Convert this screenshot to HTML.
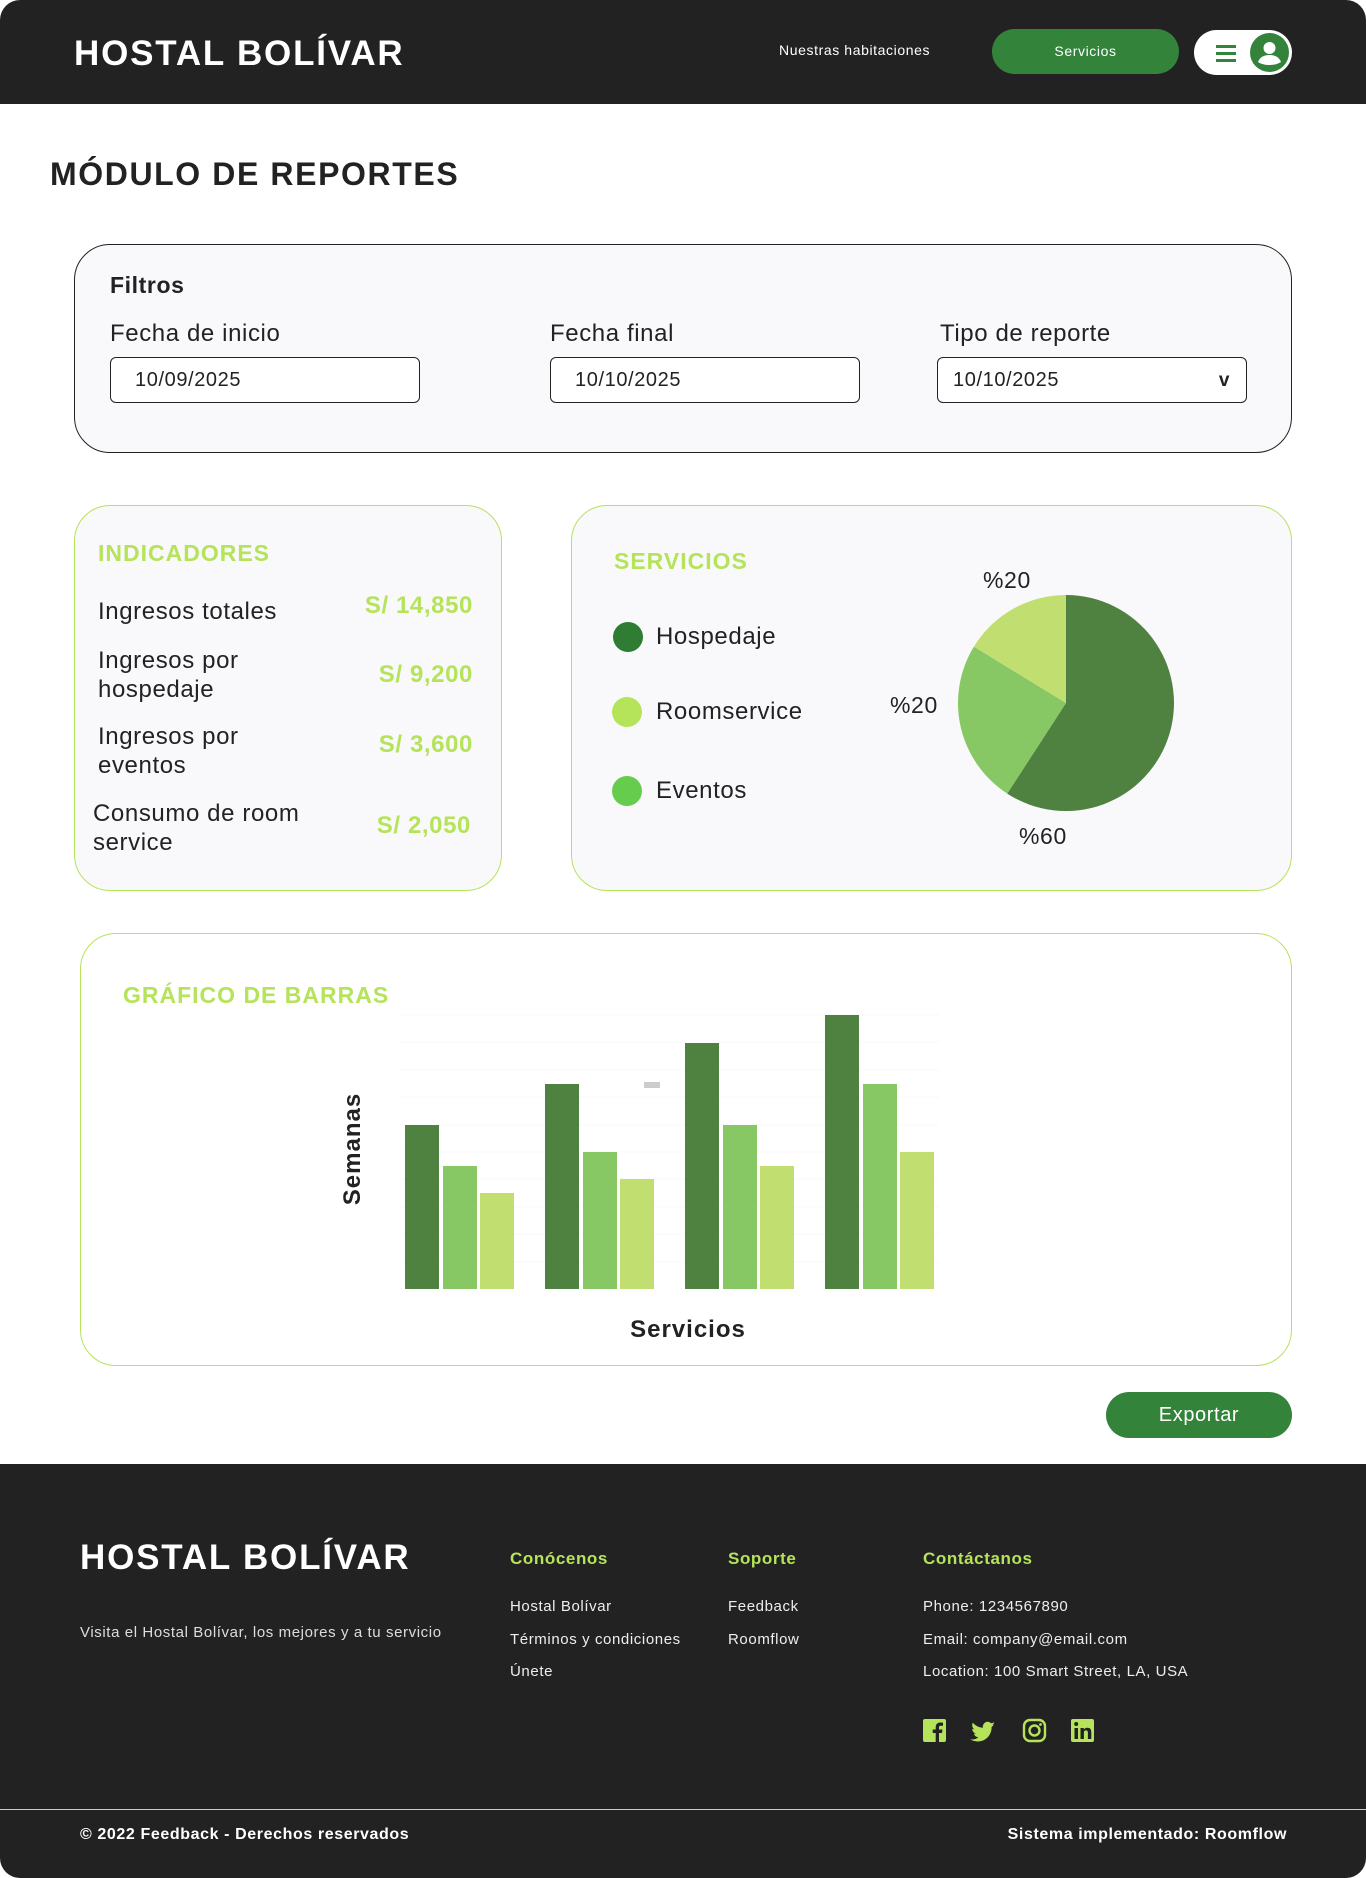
<!DOCTYPE html>
<html><head><meta charset="utf-8"><style>
*{margin:0;padding:0;box-sizing:border-box}
body{width:1366px;height:1878px;background:#fff;font-family:"Liberation Sans",sans-serif;color:#222;position:relative;overflow:hidden;letter-spacing:0.6px}
.a{position:absolute;white-space:nowrap}
.b{font-weight:bold}
.g{color:#b5e35a}
</style></head><body>
<div class="a" style="left:0;top:0;width:1366px;height:104px;background:#222;border-radius:20px 20px 0 0"></div>
<div class="a b" style="left:74px;top:34px;font-size:35px;color:#fff;letter-spacing:1.8px">HOSTAL BOLÍVAR</div>
<div class="a" style="left:779px;top:42px;font-size:14px;color:#fff">Nuestras habitaciones</div>
<div class="a" style="left:992px;top:29px;width:187px;height:45px;background:#33833a;border-radius:23px;color:#fff;font-size:14px;text-align:center;line-height:45px">Servicios</div>
<div class="a" style="left:1194px;top:30px;width:98px;height:45px;background:#fff;border-radius:23px"></div>
<div class="a" style="left:1216px;top:45px;width:20px;height:3px;background:#33833a;box-shadow:0 7px 0 #33833a,0 14px 0 #33833a"></div>
<svg class="a" style="left:1250px;top:33px" width="39" height="39" viewBox="0 0 39 39"><circle cx="19.5" cy="19.5" r="19.5" fill="#33833a"/><circle cx="19.5" cy="15" r="6" fill="#fff"/><path d="M8 29c2-5 6-7 11.5-7s9.5 2 11.5 7c-3 2-7 3-11.5 3S11 31 8 29z" fill="#fff"/></svg>

<div class="a b" style="left:50px;top:156px;font-size:32px;letter-spacing:1.6px">MÓDULO DE REPORTES</div>

<div class="a" style="left:74px;top:244px;width:1218px;height:209px;background:#f9f9fb;border:1.5px solid #222;border-radius:36px"></div>
<div class="a b" style="left:110px;top:272px;font-size:23px">Filtros</div>
<div class="a" style="left:110px;top:320px;font-size:24px">Fecha de inicio</div>
<div class="a" style="left:550px;top:320px;font-size:24px">Fecha final</div>
<div class="a" style="left:940px;top:320px;font-size:24px">Tipo de reporte</div>
<div class="a" style="left:110px;top:357px;width:310px;height:46px;background:#fff;border:1.5px solid #222;border-radius:6px;font-size:20px;line-height:45px;padding-left:24px">10/09/2025</div>
<div class="a" style="left:550px;top:357px;width:310px;height:46px;background:#fff;border:1.5px solid #222;border-radius:6px;font-size:20px;line-height:45px;padding-left:24px">10/10/2025</div>
<div class="a" style="left:937px;top:357px;width:310px;height:46px;background:#fff;border:1.5px solid #222;border-radius:6px;font-size:20px;line-height:45px;padding-left:15px">10/10/2025<span class="b" style="position:absolute;right:16px;font-size:19px">v</span></div>

<div class="a" style="left:74px;top:505px;width:428px;height:386px;background:#f9f9fb;border:1px solid #b5e35a;border-radius:36px"></div>
<div class="a b g" style="left:98px;top:540px;font-size:23px;letter-spacing:1px">INDICADORES</div>
<div class="a" style="left:98px;top:598px;font-size:24px">Ingresos totales</div>
<div class="a b g" style="right:893px;top:592px;font-size:24px">S/ 14,850</div>
<div class="a" style="left:98px;top:646px;font-size:24px;line-height:29px">Ingresos por<br>hospedaje</div>
<div class="a b g" style="right:893px;top:661px;font-size:24px">S/ 9,200</div>
<div class="a" style="left:98px;top:722px;font-size:24px;line-height:29px">Ingresos por<br>eventos</div>
<div class="a b g" style="right:893px;top:731px;font-size:24px">S/ 3,600</div>
<div class="a" style="left:93px;top:799px;font-size:24px;line-height:29px">Consumo de room<br>service</div>
<div class="a b g" style="right:895px;top:812px;font-size:24px">S/ 2,050</div>

<div class="a" style="left:571px;top:505px;width:721px;height:386px;background:#f9f9fb;border:1px solid #b5e35a;border-radius:36px"></div>
<div class="a b g" style="left:614px;top:548px;font-size:23px;letter-spacing:1px">SERVICIOS</div>
<div class="a" style="left:613px;top:622px;width:30px;height:30px;border-radius:50%;background:#2e7d32"></div>
<div class="a" style="left:612px;top:697px;width:30px;height:30px;border-radius:50%;background:#b5e35a"></div>
<div class="a" style="left:612px;top:776px;width:30px;height:30px;border-radius:50%;background:#66cc4d"></div>
<div class="a" style="left:656px;top:623px;font-size:24px">Hospedaje</div>
<div class="a" style="left:656px;top:698px;font-size:24px">Roomservice</div>
<div class="a" style="left:656px;top:777px;font-size:24px">Eventos</div>
<svg class="a" style="left:958px;top:595px" width="216" height="216" viewBox="-108 -108 216 216">
<path d="M0 0L0 -108A108 108 0 1 1 -58.8 90.6Z" fill="#4f8240"/>
<path d="M0 0L-58.8 90.6A108 108 0 0 1 -92.1 -56.4Z" fill="#88c864"/>
<path d="M0 0L-92.1 -56.4A108 108 0 0 1 0 -108Z" fill="#c0df70"/>
</svg>
<div class="a" style="left:983px;top:567px;font-size:23px">%20</div>
<div class="a" style="left:890px;top:692px;font-size:23px">%20</div>
<div class="a" style="left:1019px;top:823px;font-size:23px">%60</div>

<div class="a" style="left:80px;top:933px;width:1212px;height:433px;background:#fff;border:1px solid #b5e35a;border-radius:36px"></div>
<div class="a b g" style="left:123px;top:982px;font-size:23px;letter-spacing:1px">GRÁFICO DE BARRAS</div>
<svg class="a" style="left:0;top:0" width="1366" height="1400">
<g stroke="#f8f8f8" stroke-width="1"><line x1="400" y1="1015" x2="940" y2="1015"/><line x1="400" y1="1042" x2="940" y2="1042"/><line x1="400" y1="1070" x2="940" y2="1070"/><line x1="400" y1="1097" x2="940" y2="1097"/><line x1="400" y1="1125" x2="940" y2="1125"/><line x1="400" y1="1152" x2="940" y2="1152"/><line x1="400" y1="1179" x2="940" y2="1179"/><line x1="400" y1="1207" x2="940" y2="1207"/><line x1="400" y1="1234" x2="940" y2="1234"/><line x1="400" y1="1262" x2="940" y2="1262"/></g>
<g fill="#4f8240"><rect x="405" y="1125" width="34" height="164"/><rect x="545" y="1084" width="34" height="205"/><rect x="685" y="1043" width="34" height="246"/><rect x="825" y="1015" width="34" height="274"/></g>
<g fill="#88c864"><rect x="443" y="1166" width="34" height="123"/><rect x="583" y="1152" width="34" height="137"/><rect x="723" y="1125" width="34" height="164"/><rect x="863" y="1084" width="34" height="205"/></g>
<g fill="#c0df70"><rect x="480" y="1193" width="34" height="96"/><rect x="620" y="1179" width="34" height="110"/><rect x="760" y="1166" width="34" height="123"/><rect x="900" y="1152" width="34" height="137"/></g>
<rect x="644" y="1082" width="16" height="6" fill="#ccc"/>
<text x="0" y="0" transform="translate(360 1149) rotate(-90)" text-anchor="middle" font-family="Liberation Sans" font-weight="bold" font-size="24" letter-spacing="1" fill="#222">Semanas</text>
<text x="688" y="1337" text-anchor="middle" font-family="Liberation Sans" font-weight="bold" font-size="24" letter-spacing="1" fill="#222">Servicios</text>
</svg>

<div class="a" style="left:1106px;top:1392px;width:186px;height:46px;background:#33833a;border-radius:23px;color:#fff;font-size:20px;text-align:center;line-height:46px">Exportar</div>

<div class="a" style="left:0;top:1464px;width:1366px;height:414px;background:#222;border-radius:0 0 20px 20px"></div>
<div class="a b" style="left:80px;top:1538px;font-size:35px;color:#fff;letter-spacing:1.8px">HOSTAL BOLÍVAR</div>
<div class="a" style="left:80px;top:1624px;font-size:15px;color:#ddd">Visita el Hostal Bolívar, los mejores y a tu servicio</div>
<div class="a b g" style="left:510px;top:1549px;font-size:17px">Conócenos</div>
<div class="a b g" style="left:728px;top:1549px;font-size:17px">Soporte</div>
<div class="a b g" style="left:923px;top:1549px;font-size:17px">Contáctanos</div>
<div class="a" style="left:510px;top:1591px;font-size:15px;color:#eee;line-height:32.5px">Hostal Bolívar<br>Términos y condiciones<br>Únete</div>
<div class="a" style="left:728px;top:1591px;font-size:15px;color:#eee;line-height:32.5px">Feedback<br>Roomflow</div>
<div class="a" style="left:923px;top:1591px;font-size:15px;color:#eee;line-height:32.5px">Phone: 1234567890<br>Email: company@email.com<br>Location: 100 Smart Street, LA, USA</div>
<svg class="a" style="left:922px;top:1718px" width="175" height="26" viewBox="0 0 175 26">
<rect x="1" y="1" width="23" height="23" rx="2" fill="#b5e35a"/><path d="M17 24V15h3l.5-3.5H17V9.5c0-1 .3-1.7 1.8-1.7H21V4.7c-.4 0-1.5-.2-2.8-.2-2.7 0-4.5 1.7-4.5 4.7v2.3h-3V15h3v9z" fill="#222"/>
<path d="M73 6c-.9.4-1.8.6-2.8.8 1-.6 1.8-1.5 2.1-2.7-.9.6-2 1-3.1 1.2a4.9 4.9 0 0 0-8.3 4.5c-4-.2-7.6-2.1-10-5-.4.7-.7 1.600-.7 2.500 0 1.7.9 3.2 2.2 4.1-.8 0-1.6-.2-2.2-.6 0 2.4 1.7 4.4 3.9 4.8-.7.2-1.5.2-2.2.1.6 2 2.4 3.4 4.6 3.4A9.9 9.9 0 0 1 48 21.3c2.2 1.4 4.8 2.2 7.6 2.2 9.1 0 14-7.5 14-14v-.6c1-.7 1.8-1.6 2.4-2.5z" fill="#b5e35a"/>
<rect x="102" y="2" width="21" height="21" rx="6" fill="none" stroke="#b5e35a" stroke-width="2.4"/><circle cx="112.5" cy="12.5" r="5" fill="none" stroke="#b5e35a" stroke-width="2.4"/><circle cx="118.5" cy="6.5" r="1.4" fill="#b5e35a"/>
<rect x="149" y="1" width="23" height="23" rx="2" fill="#b5e35a"/><rect x="152.5" y="10" width="3.5" height="11" fill="#222"/><circle cx="154.2" cy="6" r="2" fill="#222"/><path d="M158.5 10h3.3v1.6c.6-1 1.8-1.9 3.6-1.9 3.3 0 3.9 2.1 3.9 4.9V21h-3.4v-5.6c0-1.4 0-3-1.9-3s-2.1 1.4-2.1 2.9V21h-3.4z" fill="#222"/>
</svg>
<div class="a" style="left:0;top:1809px;width:1366px;height:1px;background:#ccc"></div>
<div class="a b" style="left:80px;top:1826px;font-size:16px;color:#fff">© 2022 Feedback - Derechos reservados</div>
<div class="a b" style="right:79px;top:1826px;font-size:16px;color:#fff">Sistema implementado: Roomflow</div>
</body></html>
